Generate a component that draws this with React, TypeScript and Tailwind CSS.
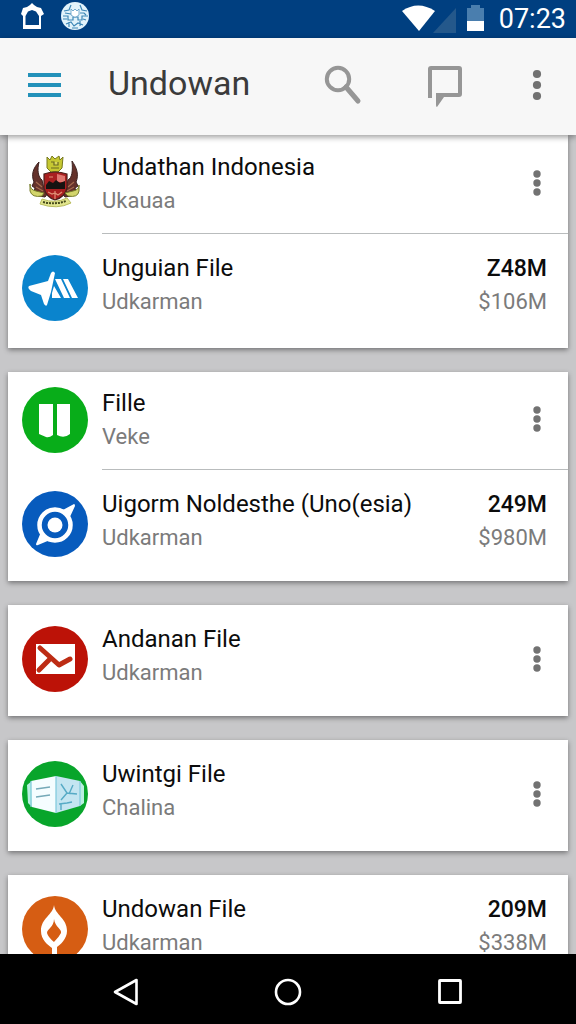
import { Fragment, type ReactNode } from "react";

type Item = {
  title: string;
  subtitle: string;
  icon: ReactNode;
  value?: string;
  price?: string;
};

function Disc({ fill, children }: { fill: string; children: ReactNode }) {
  return (
    <svg viewBox="0 0 66 66" className="block size-full" aria-hidden="true">
      <circle cx="33" cy="33" r="33" fill={fill} />
      {children}
    </svg>
  );
}

const emblem = (
  <svg viewBox="0 0 66 66" className="block size-full" aria-hidden="true">
    <path d="M17 11C11 17 9 24 12 31L10 35L13 37L12 41L16 41L17 45L23 46L26 42L22 38L20 29C16 26 15 19 17 11Z" fill="#65322b" stroke="#3c2220" strokeWidth="1" />
    <path d="M50 10C55 17 57 24 54 31L56 35L53 37L54 41L50 41L49 45L43 46L40 42L44 38L46 29C50 27 51 20 50 10Z" fill="#65322b" stroke="#3c2220" strokeWidth="1" />
    <path d="M14 31l6 5M14 36l7 4M52 31l-6 5M52 36l-7 4" stroke="#a66b4e" strokeWidth="1.2" />
    <path d="M25 6l3 3 2-4 3 3 4-3 1 4 3-3-1 11-4 4h-7l-4-4Z" fill="#c6c832" stroke="#77791e" strokeWidth="1" />
    <path d="M29 11h3v3h4v-3M29 17h8M31 21h5v4h-5z" fill="#d9d75c" stroke="#6b6923" strokeWidth="1.2" />
    <path d="M22 23q11-4 23 0v14q-2 9-12 12-9-3-11-12Z" fill="#a91f20" stroke="#4a211d" strokeWidth="1.2" />
    <path d="M35 23l8 2v6h-8z" fill="#df7770" />
    <path d="M24 34l3-4 4 2 3-3 4 3 5-2v8H24Z" fill="#161311" />
    <path d="M26 41l4 2 3-1 3 2 4-3M33 40v8M27 26h4" stroke="#df9277" strokeWidth="1.2" fill="none" />
    <path d="M8 33q0 6 6 7l8 2-2 3q-10 2-12-5ZM57 34q0 5-6 6l-8 2 3 3q10 2 11-5Z" fill="#d3d56b" stroke="#777d2a" strokeWidth="1" />
    <path d="M20 48q13 5 25-1l4 5q-14 7-31 1Z" fill="#e2e58e" stroke="#b9bd5e" strokeWidth="1" />
    <path d="M21 51q12 3 23-1" stroke="#454a1b" strokeWidth="2" strokeDasharray="2 1" fill="none" />
  </svg>
);

const groups: Item[][] = [
  [
    { title: "Undathan Indonesia", subtitle: "Ukauaa", icon: emblem },
    {
      title: "Unguian File",
      subtitle: "Udkarman",
      value: "Z48M",
      price: "$106M",
      icon: (
        <Disc fill="#0a84cd">
          <path d="M7 31L26 26L29 18Q31 15 33 18L29 37L25 50Q24 52 22 49L19 40L9 36Q5 33 7 31Z" fill="#fff" />
          <path d="M32 31L39 43H30L30 38ZM33 24h6l9 19h-6ZM41 24h5l10 19h-6Z" fill="#fff" />
        </Disc>
      ),
    },
  ],
  [
    {
      title: "Fille",
      subtitle: "Veke",
      icon: (
        <Disc fill="#08ad19">
          <path d="M17 17h14v31q-4 3-7 2l-7-3ZM35 17h13v30q-6 5-13 1Z" fill="#fff" />
        </Disc>
      ),
    },
    {
      title: "Uigorm Noldesthe (Uno(esia)",
      subtitle: "Udkarman",
      value: "249M",
      price: "$980M",
      icon: (
        <Disc fill="#075bbd">
          <circle cx="33" cy="34" r="15.5" fill="none" stroke="#fff" strokeWidth="4.5" />
          <circle cx="33" cy="34" r="7.5" fill="#fff" />
          <path d="M39 20L52 13Q53 13 53 15L47 28ZM19 41L14 53Q14 55 16 54L28 49Z" fill="#fff" />
        </Disc>
      ),
    },
  ],
  [
    {
      title: "Andanan File",
      subtitle: "Udkarman",
      icon: (
        <Disc fill="#bc1207">
          <path d="M14 18h39v30H14Z" fill="#fff" />
          <path d="M18 22L37 39L48 33M27 34L17 44" stroke="#bd2c14" strokeWidth="5" strokeLinecap="round" strokeLinejoin="round" fill="none" />
        </Disc>
      ),
    },
  ],
  [
    {
      title: "Uwintgi File",
      subtitle: "Chalina",
      icon: (
        <Disc fill="#08a52b">
          <path d="M5 24L10 20V46L6 42ZM58 20L62 25V42L58 45Z" fill="#b9efe0" />
          <path d="M9 20L34 15V52L10 46Z" fill="#f5fdff" />
          <path d="M34 15L58 20V45L34 52Z" fill="#c4e5f1" />
          <path d="M9 20V46M34 15V52M58 20V45" stroke="#7fc9dd" strokeWidth="1.2" />
          <path d="M14 28L28 26M14 36L28 34" stroke="#74a9b8" strokeWidth="1.3" />
          <path d="M39 23l6 9 10 1M45 32l-6 7M47 33l4-9M37 43l8-1M39 42v7M45 42l5-1" stroke="#56aac5" strokeWidth="1.4" fill="none" />
        </Disc>
      ),
    },
  ],
  [
    {
      title: "Undowan File",
      subtitle: "Udkarman",
      value: "209M",
      price: "$338M",
      icon: (
        <Disc fill="#d65d13">
          <path d="M32 9C33 19 45 22 45 35C45 43 38 49 35 51V66H30V52C26 49 19 44 19 35C19 22 31 19 32 9Z" fill="#fff" />
          <path d="M32 23C33 31 40 33 39 37Q37 41 32 46Q26 41 25 37C25 33 32 31 32 23Z" fill="#d65d13" />
        </Disc>
      ),
    },
  ],
];

function Dots({ large = false }: { large?: boolean }) {
  return (
    <svg viewBox="0 0 10 34" className="h-[34px] w-[10px]" aria-hidden="true" fill="#727272">
      <circle cx="5" cy={large ? 6 : 8} r={large ? 4.1 : 3.7} />
      <circle cx="5" cy="17" r={large ? 4.1 : 3.7} />
      <circle cx="5" cy={large ? 28 : 26} r={large ? 4.1 : 3.7} />
    </svg>
  );
}

function Row({ item, last }: { item: Item; last: boolean }) {
  return (
    <li className={last ? "flex h-[111px] items-start pt-[18px] pl-3.5" : "flex h-[97px] items-start pt-[15px] pl-3.5"}>
      <div className={last ? "mt-[3px] size-[66px] shrink-0" : "size-[66px] shrink-0"}>{item.icon}</div>
      <div className="min-w-0 flex-1 pl-3.5 leading-[33px]">
        <h2 className="truncate text-[24px] text-[#0c0c0c]">{item.title}</h2>
        <p className="truncate text-[22px] text-[#7b7b7b]">{item.subtitle}</p>
      </div>
      {item.value ? (
        <div className="shrink-0 pr-[21px] text-right leading-[33px]">
          <p className="text-[23px] font-medium text-[#0c0c0c]">{item.value}</p>
          <p className="text-[22px] text-[#7b7b7b]">{item.price}</p>
        </div>
      ) : (
        <button
          type="button"
          aria-label={`More options for ${item.title}`}
          className={
            last
              ? "mt-[3px] mr-[7px] flex h-[66px] w-12 shrink-0 items-center justify-center"
              : "mr-[7px] flex h-16 w-12 shrink-0 items-center justify-center"
          }
        >
          <Dots />
        </button>
      )}
    </li>
  );
}

export default function App() {
  return (
    <div className="flex h-screen flex-col overflow-hidden bg-[#c7c7c9] font-['Roboto',sans-serif]">
      <div className="flex h-[38px] shrink-0 items-center justify-between bg-[#003f80] pr-[10px] pl-5">
        <div className="flex items-center gap-4 pb-1.5">
          <svg viewBox="0 0 24 28" className="h-7 w-6" aria-hidden="true">
            <path d="M1 12L3 6L7 5L10 3L12 1L14 3L17 5L21 6L24 12L21 14V27H3V14ZM5.500 14V23H19V14L16 9.500L12 8L8 9.500Z" fillRule="evenodd" fill="#fff" />
          </svg>
          <svg viewBox="0 0 30 30" className="size-[30px]" aria-hidden="true">
            <circle cx="15" cy="15" r="14" fill="#e2f3fb" />
            <path d="M4 10l5-1 2-5M20 4l2 5 5 1M3 15h5v4h5v-3h5v3h4v-4h6M6 23l5-2 3 4 4-3 5 2M5 12l6 1M20 12h4l2 2M9 21v5M20 20v5M3 18h4M23 18l3 1M12 27h6" fill="none" stroke="#3d87b6" strokeWidth="1.2" />
            <path d="M11 8l2 2 2-2 2 2 2-2v6l-3 2h-2l-3-2Z" fill="#fff" stroke="#5b9bc3" strokeWidth="0.8" />
          </svg>
        </div>
        <div className="flex items-center text-white">
          <svg viewBox="0 0 84 30" className="h-[30px] w-[84px]" aria-hidden="true">
            <path d="M1 7Q17-4 34 7L18 27Z" fill="#fff" />
            <path d="M55 4V29H32Z" fill="#24588b" />
            <path d="M66 4h4V1h9v3h4v23H66Z" fill="#4a7eae" />
            <path d="M66 17h17v10H66Z" fill="#fff" />
          </svg>
          <time className="pl-[14px] text-[27px] leading-8">07:23</time>
        </div>
      </div>

      <header className="relative z-10 flex h-[97px] shrink-0 items-center bg-[#f7f7f7] pb-1 shadow-[0_2px_6px_rgba(0,0,0,0.4)]">
        <button type="button" aria-label="Open menu" className="ml-5 flex size-12 items-center justify-center">
          <svg viewBox="0 0 33 26" className="h-[26px] w-[33px]" aria-hidden="true">
            <path d="M0 3h33M0 13h33M0 23h33" stroke="#2391b9" strokeWidth="3.8" />
          </svg>
        </button>
        <h1 className="flex-1 pl-10 pb-1 text-[34px] leading-10 text-[#3b3b3b]">Undowan</h1>
        <button type="button" aria-label="Search" className="mr-[54px] flex size-12 items-center justify-center">
          <svg viewBox="0 0 40 42" className="h-[42px] w-10" aria-hidden="true" fill="none" stroke="#969696">
            <circle cx="15" cy="15" r="11.2" strokeWidth="4" />
            <path d="M23 23L35 37" strokeWidth="5" strokeLinecap="round" />
          </svg>
        </button>
        <button type="button" aria-label="Messages" className="mr-11 flex size-12 items-center justify-center">
          <svg viewBox="0 0 36 44" className="h-11 w-9" aria-hidden="true">
            <path d="M5 35H1V6Q1 3 4 3H32Q35 3 35 6V31Q35 34 32 34H17L10 44Q9 44 9 42V30H31V7H5Z" fillRule="evenodd" fill="#969696" />
          </svg>
        </button>
        <button type="button" aria-label="More options" className="mr-[15px] flex size-12 items-center justify-center">
          <Dots large />
        </button>
      </header>

      <main className="flex min-h-0 flex-1 flex-col gap-6 overflow-hidden px-2">
        {groups.map((items, index) => (
          <ul
            key={items[0].title}
            className={
              index === 0
                ? "shrink-0 bg-white pt-px pb-[3px] shadow-[0_2px_5px_rgba(0,0,0,0.42)]"
                : "shrink-0 bg-white shadow-[0_2px_5px_rgba(0,0,0,0.42)]"
            }
          >
            {items.map((item, i) => (
              <Fragment key={item.title}>
                {i > 0 && <li role="separator" className="ml-[94px] h-px bg-[#b9bcbd]" />}
                <Row item={item} last={i === items.length - 1} />
              </Fragment>
            ))}
          </ul>
        ))}
      </main>

      <nav aria-label="System" className="relative z-10 flex h-[70px] shrink-0 items-center justify-center gap-[114px] bg-black pt-1.5">
        <button type="button" aria-label="Back" className="flex size-12 items-center justify-center">
          <svg viewBox="0 0 28 28" className="size-7" aria-hidden="true">
            <path d="M24.500 2V26L3 14Z" fill="none" stroke="#fff" strokeWidth="2.6" strokeLinejoin="round" />
          </svg>
        </button>
        <button type="button" aria-label="Home" className="flex size-12 items-center justify-center">
          <svg viewBox="0 0 28 28" className="size-7" aria-hidden="true">
            <circle cx="14" cy="14" r="12" fill="none" stroke="#fff" strokeWidth="2.6" />
          </svg>
        </button>
        <button type="button" aria-label="Recent apps" className="flex size-12 items-center justify-center">
          <svg viewBox="0 0 28 28" className="size-7" aria-hidden="true">
            <rect x="3.500" y="2.500" width="21" height="22" rx="0.500" fill="none" stroke="#fff" strokeWidth="2.8" />
          </svg>
        </button>
      </nav>
    </div>
  );
}
